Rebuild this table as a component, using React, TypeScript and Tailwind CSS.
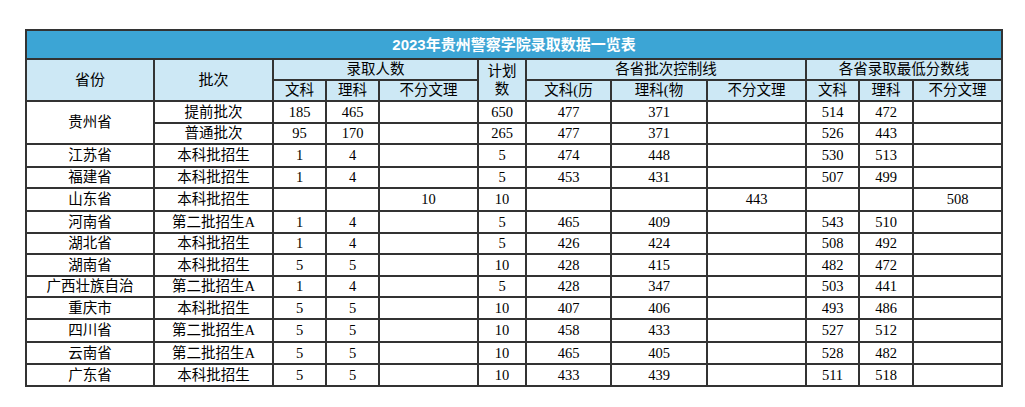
import React from "react";

type Row = (string | null)[];

const rows: Row[] = [
  ["贵州省", "提前批次", "185", "465", "", "650", "477", "371", "", "514", "472", ""],
  [null, "普通批次", "95", "170", "", "265", "477", "371", "", "526", "443", ""],
  ["江苏省", "本科批招生", "1", "4", "", "5", "474", "448", "", "530", "513", ""],
  ["福建省", "本科批招生", "1", "4", "", "5", "453", "431", "", "507", "499", ""],
  ["山东省", "本科批招生", "", "", "10", "10", "", "", "443", "", "", "508"],
  ["河南省", "第二批招生A", "1", "4", "", "5", "465", "409", "", "543", "510", ""],
  ["湖北省", "本科批招生", "1", "4", "", "5", "426", "424", "", "508", "492", ""],
  ["湖南省", "本科批招生", "5", "5", "", "10", "428", "415", "", "482", "472", ""],
  ["广西壮族自治", "第二批招生A", "1", "4", "", "5", "428", "347", "", "503", "441", ""],
  ["重庆市", "本科批招生", "5", "5", "", "10", "407", "406", "", "493", "486", ""],
  ["四川省", "第二批招生A", "5", "5", "", "10", "458", "433", "", "527", "512", ""],
  ["云南省", "第二批招生A", "5", "5", "", "10", "465", "405", "", "528", "482", ""],
  ["广东省", "本科批招生", "5", "5", "", "10", "433", "439", "", "511", "518", ""],
];

const cell = "flex items-center justify-center bg-white overflow-hidden whitespace-nowrap";
const head = "flex items-center justify-center bg-[#cde8f5] overflow-hidden whitespace-nowrap";

export default function App() {
  return (
    <div className="w-[1025px] h-[407px] bg-white pt-[29px] pl-[25px]">
      <div
        className="grid w-[978px] gap-[2px] p-[2px] bg-[#333333] text-[14.5px] leading-none text-black grid-cols-[126px_117px_51px_51px_97px_46px_83px_94px_97px_51px_52px_87px] grid-rows-[27px_19px_19px_20px_19px_21px_19px_21px_20px_19px_20px_19px_20px_21px_20px_20px]"
        style={{ fontFamily: '"Liberation Serif", "Noto Sans CJK SC", serif' }}
      >
        <div
          className="col-span-12 flex items-center justify-center bg-[#3ca5d5] text-white font-bold text-[15px]"
          style={{ fontFamily: '"Liberation Sans", "Noto Sans CJK SC", sans-serif' }}
        >
          2023年贵州警察学院录取数据一览表
        </div>
        <div className={`${head} row-span-2 text-[15px]`}>省份</div>
        <div className={`${head} row-span-2 text-[15px]`}>批次</div>
        <div className={`${head} col-span-3`}>录取人数</div>
        <div className={`${head} row-span-2 flex-col gap-[4px]`}>
          <span>计划</span>
          <span>数</span>
        </div>
        <div className={`${head} col-span-3`}>各省批次控制线</div>
        <div className={`${head} col-span-3`}>各省录取最低分数线</div>
        <div className={head}>文科</div>
        <div className={head}>理科</div>
        <div className={head}>不分文理</div>
        <div className={head}>文科(历</div>
        <div className={head}>理科(物</div>
        <div className={head}>不分文理</div>
        <div className={head}>文科</div>
        <div className={head}>理科</div>
        <div className={head}>不分文理</div>
        {rows.map((r, ri) =>
          r.map((v, ci) => {
            if (v === null) return null;
            const span = ri === 0 && ci === 0 ? " row-span-2" : "";
            return (
              <div key={`${ri}-${ci}`} className={cell + span}>
                {v}
              </div>
            );
          })
        )}
      </div>
    </div>
  );
}
